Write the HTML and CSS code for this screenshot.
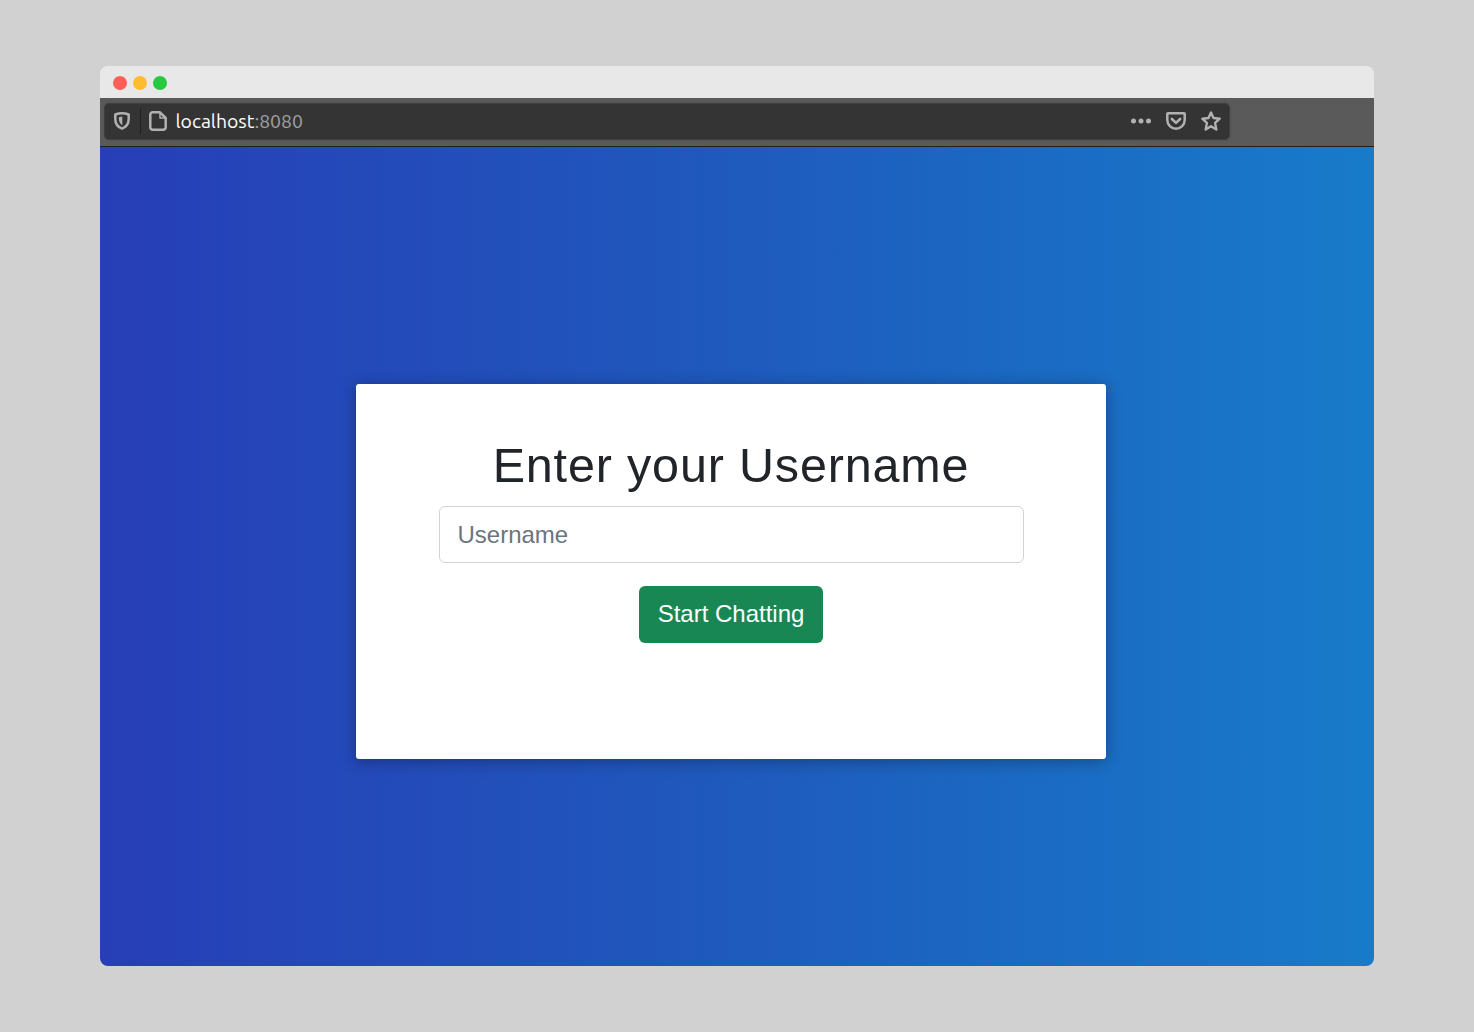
FILE: index.html
```html
<!DOCTYPE html>
<html lang="en">
<head>
<meta charset="utf-8">
<title>Chat</title>
<link rel="stylesheet" href="styles.css">
</head>
<body>
<div class="window">
  <div class="titlebar">
    <span class="dot dot-close"></span>
    <span class="dot dot-min"></span>
    <span class="dot dot-max"></span>
  </div>
  <div class="toolbar">
    <div class="urlbar">
      <svg class="icon-shield" width="16" height="18" viewBox="0 0 16 18" fill="none" stroke="#b1b1b1" stroke-width="2.5" stroke-linejoin="round">
        <path d="M8 1.3C5.8 1.3 3.500 1.700 1.300 2.500V7c0 4.600 2.500 8 6.700 9.600 4.200-1.600 6.700-5 6.700-9.600V2.500C12.500 1.700 10.200 1.300 8 1.300Z"/>
        <path d="M8.300 4.500V13.200C6 11.700 4.900 9.500 4.900 7V5.200Z" fill="#b1b1b1" stroke="none"/>
      </svg>
      <span class="divider"></span>
      <svg class="icon-page" width="18" height="20" viewBox="0 0 18 20" fill="none" stroke="#b1b1b1" stroke-width="2.500" stroke-linejoin="round">
        <path d="M3.600 1.300H11L16.700 7V16.300A2.400 2.400 0 0 1 14.300 18.700H3.700A2.400 2.400 0 0 1 1.300 16.300V3.700A2.400 2.400 0 0 1 3.700 1.300Z"/>
        <path d="M11 1.500V7H16.500" stroke-width="1.500"/>
      </svg>
      <span class="url"><span class="host">localhost</span><span class="port">:8080</span></span>
      <div class="actions">
        <svg width="20" height="6" viewBox="0 0 20 6" fill="#b1b1b1">
          <circle cx="2.500" cy="3" r="2.500"/><circle cx="10" cy="3" r="2.500"/><circle cx="17.500" cy="3" r="2.500"/>
        </svg>
        <svg width="20" height="18" viewBox="0 0 20 18" fill="none" stroke="#b1b1b1" stroke-width="2.500" stroke-linecap="round" stroke-linejoin="round">
          <path d="M1.900 1.300H18.100Q18.700 1.300 18.700 1.900V8A8.700 8.700 0 0 1 1.300 8V1.900Q1.300 1.300 1.900 1.300Z"/>
          <path d="M5.900 7L10 10.900L14.100 7" stroke-width="2.600"/>
        </svg>
        <svg width="20" height="20" viewBox="0 0 20 20" fill="none" stroke="#b1b1b1" stroke-width="2.400" stroke-linejoin="round">
          <path d="M10 1.500L12.500 7L18.700 7.700L14.100 11.900L15.300 18.500L10 15.200L4.700 18.500L5.900 11.900L1.300 7.700L7.500 7Z"/>
        </svg>
      </div>
    </div>
  </div>
  <main class="page">
    <form class="card">
      <h1 class="title">Enter your Username</h1>
      <input class="field" type="text" placeholder="Username" aria-label="Username">
      <button class="submit" type="button">Start Chatting</button>
    </form>
  </main>
</div>
</body>
</html>
```
FILE: styles.css
```css
* { box-sizing: border-box; }
body {
  margin: 0;
  height: 1032px;
  padding: 66px 100px;
  background: #d1d1d1;
  font-family: "Liberation Sans", Arial, sans-serif;
}
.window {
  height: 900px;
  display: flex;
  flex-direction: column;
  border-radius: 8px;
  overflow: hidden;
}
.titlebar {
  height: 32px;
  display: flex;
  align-items: center;
  gap: 6px;
  padding: 2px 13px 0;
  background: #e8e8e8;
}
.dot { width: 14px; height: 14px; border-radius: 50%; }
.dot-close { background: #ff5f57; }
.dot-min { background: #febc2e; }
.dot-max { background: #28c840; }
.toolbar {
  height: 49px;
  padding: 5px 4px 0;
  background: #5a5a5a;
  border-bottom: 1px solid #202020;
}
.urlbar {
  width: 1126px;
  height: 37px;
  display: flex;
  align-items: center;
  padding: 0 8px 1px 10px;
  border: 1px solid #3e3e3e;
  border-radius: 5px;
  background: #343434;
  box-shadow: 0 0 3px rgba(0, 0, 0, .15);
}
.icon-shield { margin-left: -1px; }
.divider { width: 1px; height: 26px; margin: 0 8px 0 10px; background: #222; }
.url {
  margin: 0 0 0 8.500px;
  font: 19.400px/24px "Ubuntu", "Noto Sans", sans-serif;
  color: #a0a0a0;
}
.host { color: #fff; }
.actions { margin-left: auto; display: flex; align-items: center; gap: 15px; }
.page {
  flex: 1;
  padding: 237px 268px 0 256px;
  background: linear-gradient(to right, #273eb7, #1f5abd 50%, #1b68c2 70%, #187bca);
}
.card {
  width: 750px;
  height: 375px;
  display: flex;
  flex-direction: column;
  align-items: center;
  padding-top: 53px;
  border-radius: 3px;
  background: #fff;
  box-shadow: 0 2px 16px rgba(0, 0, 0, .32);
}
.title {
  margin: 0 0 12px;
  font-size: 48.500px;
  font-weight: 400;
  line-height: 57px;
  letter-spacing: .830px;
  color: #212529;
}
.field {
  width: 585px;
  height: 57px;
  padding: 0 17.500px;
  border: 1px solid #ced4da;
  border-radius: 6px;
  font: 24px "Liberation Sans", Arial, sans-serif;
  margin-left: 1px;
}
.field::placeholder { color: #6c757d; opacity: 1; }
.submit {
  width: 184px;
  height: 57px;
  margin-top: 23px;
  padding: 0 0 2px;
  border: 0;
  border-radius: 6px;
  background: #198754;
  color: #fff;
  font: 24px "Liberation Sans", Arial, sans-serif;
}
```
